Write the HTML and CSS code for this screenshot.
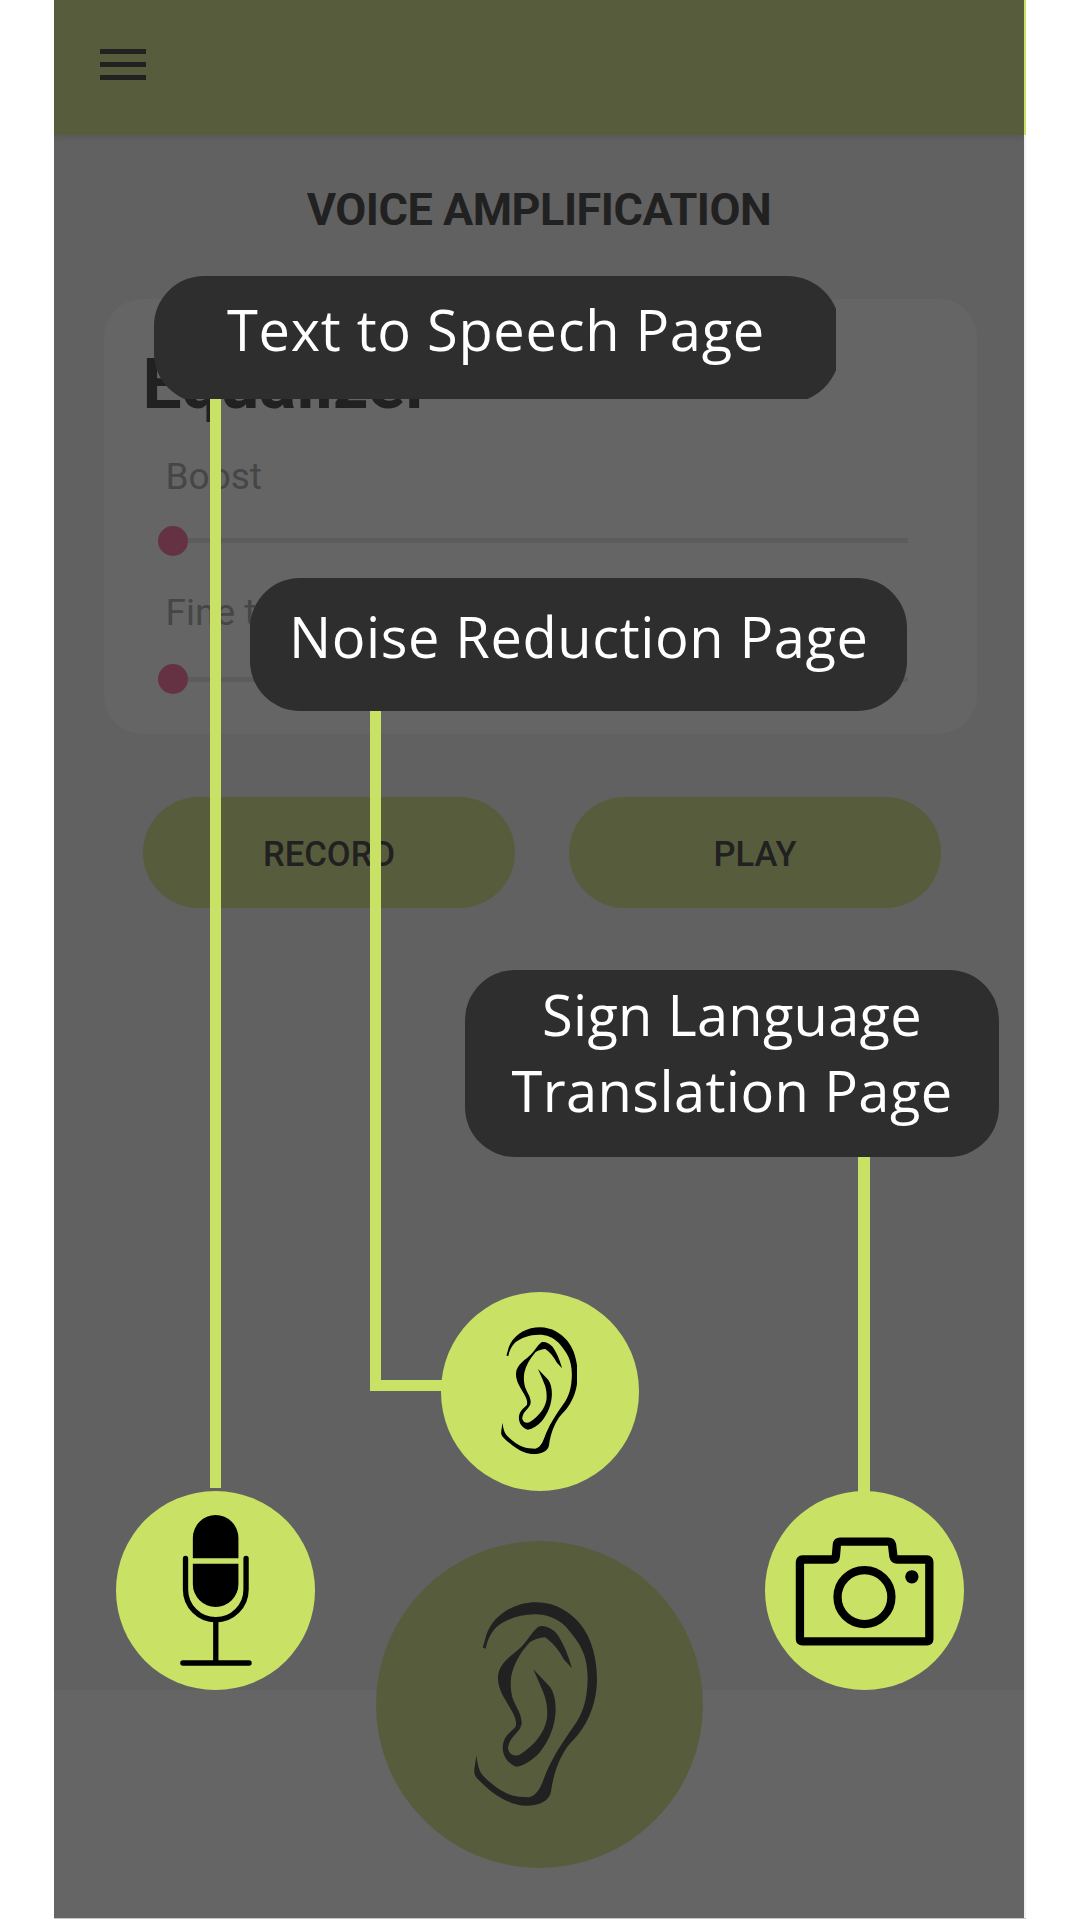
FILE: index.html
```html
<!DOCTYPE html>
<html lang="en">
<head>
<meta charset="utf-8">
<title>Voice Amplification</title>
<link rel="stylesheet" href="styles.css">
</head>
<body>
<svg class="defs" width="0" height="0" aria-hidden="true">
  <symbol id="ear" viewBox="343 217 369 611">
    <path d="M369 353C376 335 378 314 387 298C414 246 472 217 530 217C590 218 630 246 660 280C698 325 712 390 712 450C711 515 690 570 655 615C640 633 625 645 614 665C590 704 580 745 574 785C570 812 540 828 500 828C440 826 390 784 352 745C340 732 344 718 346 705L350 677C354 705 358 722 368 735C392 762 425 784 447 793C465 800 490 802 508 802C540 795 548 755 562 723C582 677 607 640 640 592C670 552 683 510 684 445C683 370 660 340 620 292C594 265 562 253 525 253C480 254 440 267 410 292C393 309 382 333 378 357Z"/>
    <path d="M637 415L612 388C597 358 578 337 556 322C540 323 524 328 510 337C480 370 462 405 455 438C451 465 454 485 458 502C467 530 485 548 486 577C486 608 450 615 445 655C448 675 464 680 480 675C525 645 554 610 562 565C567 515 549 485 540 462L521 418L570 470C583 487 588 512 588 540C587 590 567 635 540 668C520 690 495 706 472 711C447 704 429 680 429 653C430 615 460 603 468 590C475 565 450 535 437 510C424 488 414 465 415 440C418 395 465 372 487 349C507 328 518 305 536 291C550 284 575 294 590 310C608 333 625 372 637 415Z"/>
  </symbol>
</svg>

<div class="phone">
  <div class="screen">
    <header class="app-bar">
      <div class="menu"><span></span><span></span><span></span></div>
    </header>
    <main class="content">
      <h1 class="title">VOICE AMPLIFICATION</h1>
      <section class="card">
        <h2 class="card-title">Equalizer</h2>
        <div class="label">Boost</div>
        <div class="slider"><i class="thumb"></i><i class="track"></i></div>
        <div class="label label-second">Fine tuning</div>
        <div class="slider slider-second"><i class="thumb"></i><i class="track"></i></div>
      </section>
      <div class="buttons">
        <button class="btn">RECORD</button>
        <button class="btn">PLAY</button>
      </div>
    </main>
    <footer class="bottom-bar">
      <div class="main-action"><svg class="ear-large"><use href="#ear"/></svg></div>
    </footer>
  </div>
  <div class="edge"></div>
</div>

<div class="connector connector-speech"></div>
<div class="connector connector-noise"></div>
<div class="connector connector-sign"></div>

<div class="callout callout-speech"><span class="t-speech">Text to Speech Page</span></div>
<div class="callout callout-noise"><span class="t-noise">Noise Reduction Page</span></div>
<div class="callout callout-sign"><span class="t-sign1">Sign Language</span><span class="t-sign2">Translation Page</span></div>

<div class="fab fab-ear"><svg class="ear-small"><use href="#ear"/></svg></div>
<div class="fab fab-mic">
  <svg viewBox="48 63 597 597">
    <path d="M279 265V204A68.500 68.500 0 0 1 416 204V265ZM279 282H416V343A68.500 68.500 0 0 1 279 343Z"/>
    <path class="stroke mic-stroke" d="M257 266V359A91 91 0 0 0 439 359V266M348 450V580M249 580H448"/>
  </svg>
</div>
<div class="fab fab-camera">
  <svg viewBox="45 63 597 597">
    <path class="stroke camera-stroke" d="M157 269H248Q257 268 258 259L261 225Q262 215 271 215H416Q425 215 427 225L431 259Q433 269 442 269H532Q539 269 539 276V508Q539 515 532 515H157Q150 515 150 508V276Q150 269 157 269Z"/>
    <circle class="stroke camera-stroke" cx="344" cy="382" r="81"/>
    <circle cx="486.500" cy="321" r="20"/>
  </svg>
</div>
</body>
</html>
```
FILE: styles.css
```css
* { box-sizing: border-box; }
body {
  position: relative;
  width: 1080px;
  height: 1920px;
  margin: 0;
  overflow: hidden;
  background: #fff;
  font-family: Roboto, "Liberation Sans", sans-serif;
  color: #212121;
}
h1, h2 { margin: 0; }
.defs { display: block; position: absolute; }
.phone { display: flex; width: 972px; height: 1919px; margin-left: 54px; border-bottom: 1px solid #c8c8c8; }
.screen { display: flex; flex-direction: column; width: 970px; overflow: hidden; background: #616161; }
.edge { width: 2px; background: linear-gradient(#c9e265 135px, #f3eff2 135px); }

.app-bar {
  height: 135px;
  padding: 48.500px 46px;
  background: #575d3c;
  box-shadow: 0 1px 7px rgba(0, 0, 0, .13);
}
.menu { display: flex; flex-direction: column; gap: 8px; width: 46px; }
.menu span { height: 5px; background: #212121; }

.content { flex: 1; display: flex; flex-direction: column; }
.title { height: 164px; padding-top: 48px; font-size: 45px; line-height: 53px; font-weight: 700; text-align: center; letter-spacing: -.5px; }
.card { width: 873px; height: 435px; margin-left: 49.500px; padding: 52px 69px 0 39px; border-radius: 38px; background: #656565; }
.card-title { height: 102px; font-size: 69.500px; line-height: 67px; font-weight: 700; }
.label { height: 48px; margin-left: 23px; font-size: 37px; line-height: 48px; color: #464646; }
.slider { display: flex; align-items: center; height: 30px; margin: 24.700px 0 0 15.500px; }
.thumb { width: 30px; height: 30px; border-radius: 50%; background: #653243; }
.track { flex: 1; height: 5px; background: #5c5c5c; }
.label-second { margin-top: 33.300px; }
.slider-second { margin-top: 27.300px; }
.buttons { display: flex; gap: 54px; padding: 62.500px 0 0 89px; }
.btn { width: 372px; height: 111.500px; padding: 3px 0 0; border: 0; border-radius: 56px; background: #575d3c; color: #212121; font: 500 34.600px/40px Roboto, sans-serif; }
.bottom-bar { display: flex; justify-content: center; position: relative; height: 228px; background: #656565; }
.main-action { display: grid; place-items: center; width: 327px; height: 327px; margin: -149.500px 0 0 1px; border-radius: 50%; background: #575d3c; fill: #212121; }
.ear-large { width: 123px; height: 204px; margin-right: 7.500px; }

.connector { position: absolute; background: #c9e265; }
.connector-speech { left: 210px; top: 399px; width: 11px; height: 1089px; }
.connector-noise { left: 370px; top: 711px; width: 75px; height: 680px; border: solid #c9e265; border-width: 0 0 11px 11px; background: none; }
.connector-sign { left: 858px; top: 1157px; width: 11.500px; height: 340px; }

.callout {
  position: absolute;
  display: flex;
  flex-direction: column;
  align-items: center;
  border-radius: 50px;
  background: #2e2e2e;
  color: #fff;
  font-family: "Open Sans", sans-serif;
  font-weight: 400;
  font-size: 56px;
  line-height: 76px;
  white-space: nowrap;
}
.callout-speech { left: 154px; top: 276px; width: 686px; height: 127px; padding: 15px 2px 0 0; border-radius: 50px 53px 53px 50px; clip-path: inset(0 4px 4px 0); }
.callout-noise { left: 249.500px; top: 578px; width: 657.500px; height: 133px; padding: 20px 0 0 1px; }
.callout-sign { left: 465px; top: 969.500px; width: 534px; height: 187.500px; padding-top: 6px; }
.t-speech { letter-spacing: .7px; }
.t-noise { letter-spacing: .6px; }
.t-sign1 { letter-spacing: .25px; }
.t-sign2 { letter-spacing: .42px; }

.fab { position: absolute; width: 198.600px; height: 198.600px; border-radius: 50%; background: #c9e265; }
.fab svg { display: block; width: 100%; height: 100%; }
.fab-ear { left: 440.800px; top: 1292px; padding: 35.300px 0 0 59.900px; }
.fab .ear-small { width: 76.700px; height: 127.300px; }
.fab-mic { left: 116px; top: 1491px; }
.fab-camera { left: 765px; top: 1491px; }
.stroke { fill: none; stroke: #000; stroke-linecap: round; stroke-linejoin: round; }
.mic-stroke { stroke-width: 16; }
.camera-stroke { stroke-width: 25; }
```
